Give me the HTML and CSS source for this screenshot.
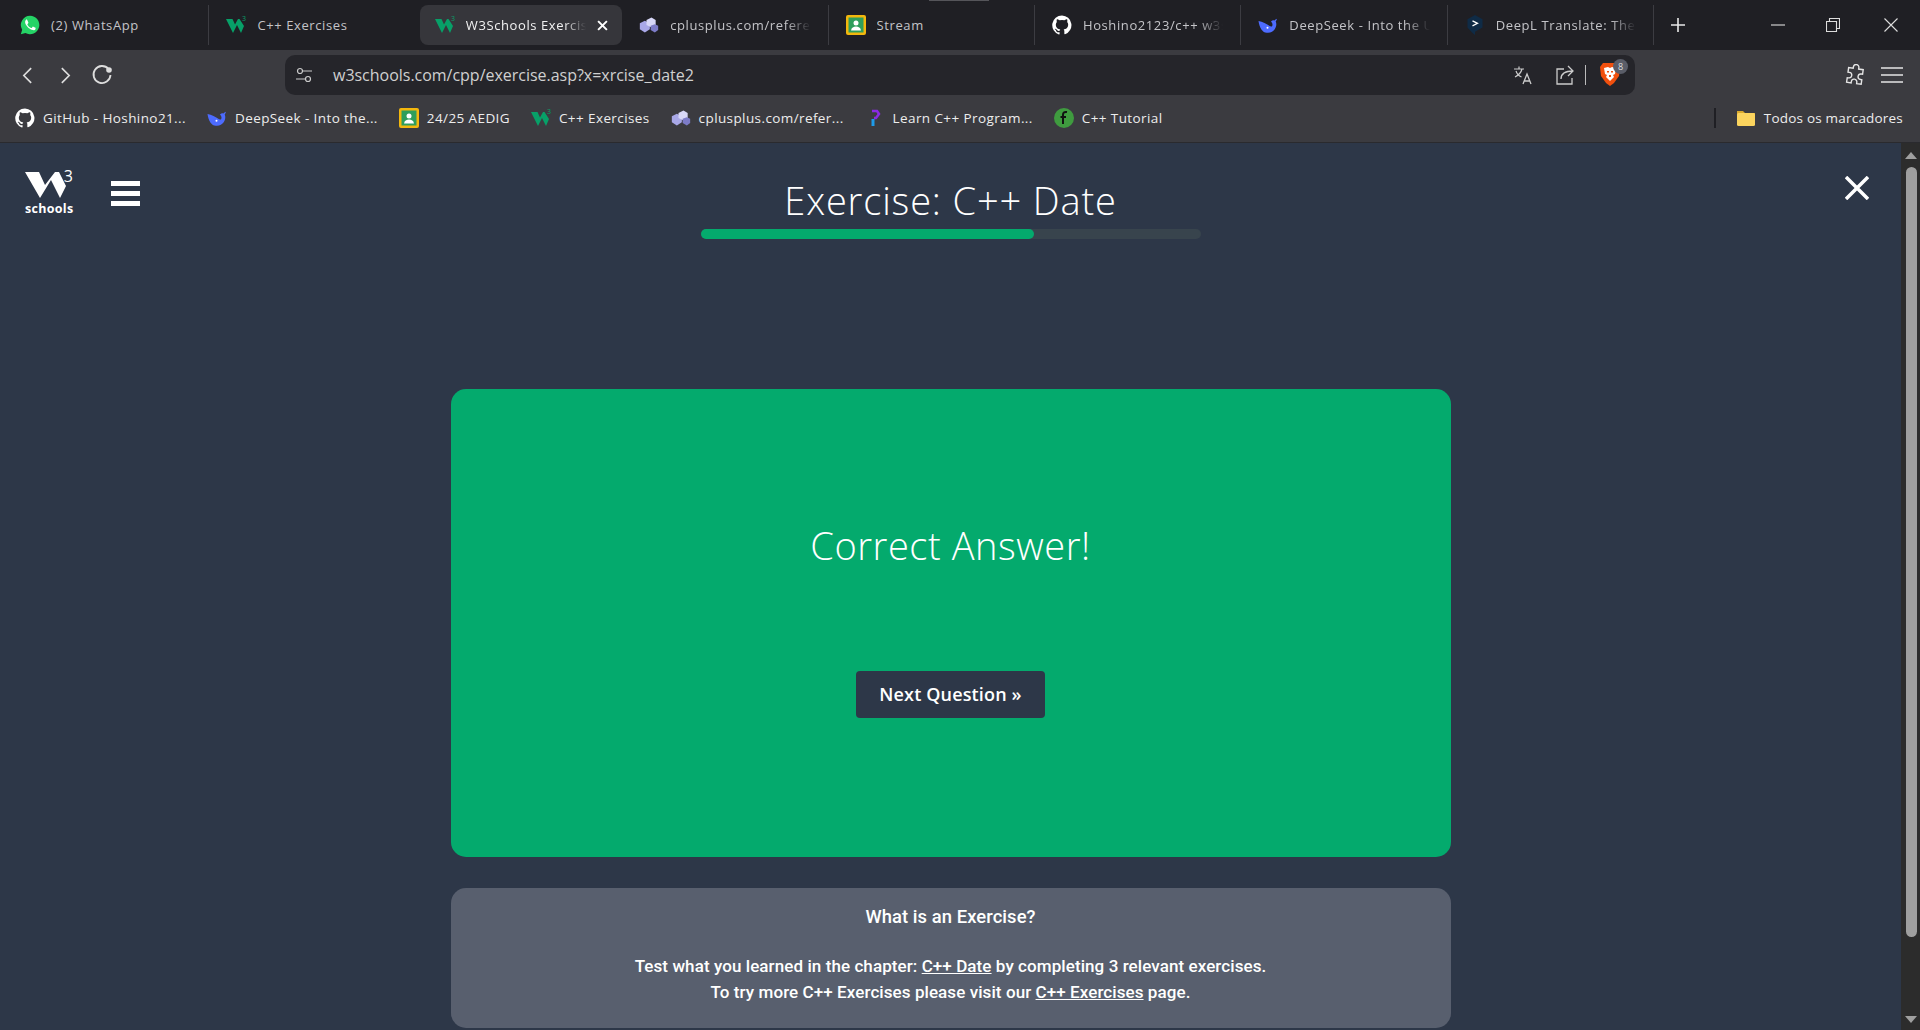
FILE: index.html
```html
<!DOCTYPE html>
<html lang="en">

<head>
  <meta charset="UTF-8">
  <title>W3Schools Exercise</title>
  <link rel="stylesheet" href="styles.css">
</head>

<body>
  <!-- icons used more than once -->
  <svg class="defs" aria-hidden="true">
    <symbol id="i-w3" viewBox="0 0 20 20">
      <polygon fill="#07a068" points="0,4 6.500,4 9,9.500 12,4 13.500,4 18,11 15,18 11,10 7,18" />
      <text x="16" y="5.500" font-size="7" fill="#07a068" font-family="Open Sans">3</text>
    </symbol>
    <symbol id="i-github" viewBox="0 0 24 24">
      <path fill="#fff" d="M12 .5a11.700 11.700 0 0 0-3.700 22.800c.6.100.8-.3.800-.6v-2c-3.300.7-4-1.600-4-1.600-.5-1.400-1.300-1.800-1.300-1.800-1.100-.7.100-.7.100-.7 1.200.1 1.800 1.200 1.800 1.200 1.100 1.800 2.800 1.300 3.500 1 .1-.8.400-1.300.8-1.600-2.600-.3-5.400-1.300-5.400-5.800 0-1.300.5-2.300 1.200-3.100-.1-.3-.5-1.500.1-3.100 0 0 1-.3 3.200 1.200a11 11 0 0 1 5.800 0c2.200-1.500 3.200-1.200 3.200-1.200.6 1.600.2 2.800.1 3.100.8.800 1.200 1.900 1.200 3.100 0 4.500-2.800 5.500-5.400 5.800.4.400.8 1.100.8 2.200v3.200c0 .3.200.7.800.6A11.700 11.700 0 0 0 12 .5z" />
    </symbol>
    <symbol id="i-deepseek" viewBox="0 0 20 20">
      <path fill="#4d6bfe" d="M.5 6c2 .5 4 1 6 2 2.500 1.200 5 3 6.500 3.500 1 .3 1.500-.5 1.500-2 0-1-.5-2-1.500-3 1-1 2.500-1.500 3.500-1 .5-.8 1.300-1.300 2.500-1.800-.3 1.200-.7 2-1.300 2.800 1 2 .8 5-.8 7.500-1.700 2.500-4.500 4-7.400 3.800C5 18.500 1.500 13 .5 6z" />
      <circle cx="9.500" cy="12.800" r="1" fill="#fff" />
    </symbol>
    <symbol id="i-classroom" viewBox="0 0 20 20">
      <rect width="20" height="20" rx="2" fill="#f3b70d" />
      <rect x="2.500" y="2.500" width="15" height="15" fill="#2f9e5b" />
      <circle cx="10" cy="8" r="2.500" fill="#fff" />
      <path fill="#fff" d="M5 15.500c.5-3 2.500-4 5-4s4.500 1 5 4z" />
    </symbol>
    <symbol id="i-cplusplus" viewBox="0 0 24 20">
      <path fill="#a9a8e8" d="M1 8l6-3 6 3v7l-6 4-6-4z" />
      <path fill="#d8d8f8" d="M9 4l6-3 5 3v6l-5 3-6-3z" />
      <path fill="#7d7cc8" d="M14 11l5-2 4 2v5l-4 3-5-3z" />
    </symbol>
  </svg>

  <!-- tab strip -->
  <div class="tabStrip">
    <div class="tabMark"></div>
    <div class="tab">
      <svg class="tabIcon" viewBox="0 0 24 24">
        <path fill="#25d366" d="M12 1a11 11 0 0 0-9.400 16.600L1 23l5.600-1.500A11 11 0 1 0 12 1z" />
        <path fill="#fff" d="M8.300 6.500c-.3 0-.8.100-1.200.6-.5.500-1.500 1.500-1.500 3.400s1.500 3.900 1.700 4.100c.2.300 3 4.600 7.200 6.100 3.500 1.200 4.200.6 5-.5.500-.8.500-2 .3-2.200l-3-1.500c-.4-.1-.6-.2-.9.200l-1.200 1.500c-.2.300-.5.300-.9.100-1.700-.8-3.600-2.200-5-4.600-.2-.4 0-.6.200-.8l1-1.400c.1-.3.100-.5 0-.7l-1.300-3.100c-.2-.5-.4-.6-.7-.6z" transform="translate(1.200 -.5) scale(.88)" />
      </svg>
      <span class="tabLabel">(2) WhatsApp</span>
    </div>
    <div class="tab">
      <svg class="tabIcon"><use href="#i-w3" /></svg>
      <span class="tabLabel">C++ Exercises</span>
    </div>
    <div class="tab tabActive">
      <svg class="tabIcon"><use href="#i-w3" /></svg>
      <span class="tabLabel tabFade">W3Schools Exercise</span>
      <svg class="tabClose" viewBox="0 0 10 10">
        <path d="M1 1l8 8M9 1l-8 8" stroke="#fff" stroke-width="1.800" />
      </svg>
    </div>
    <div class="tab">
      <svg class="tabIcon"><use href="#i-cplusplus" /></svg>
      <span class="tabLabel tabFade">cplusplus.com/reference</span>
    </div>
    <div class="tab">
      <svg class="tabIcon"><use href="#i-classroom" /></svg>
      <span class="tabLabel">Stream</span>
    </div>
    <div class="tab">
      <svg class="tabIcon"><use href="#i-github" /></svg>
      <span class="tabLabel tabFade">Hoshino2123/c++ w3schools</span>
    </div>
    <div class="tab">
      <svg class="tabIcon"><use href="#i-deepseek" /></svg>
      <span class="tabLabel tabFade">DeepSeek - Into the Unknown</span>
    </div>
    <div class="tab">
      <svg class="tabIcon" viewBox="0 0 20 24">
        <path fill="#0f2b46" d="M10 0l9 5v10l-9 5v4l-3-2.500L1 15V5z" />
        <path fill="none" stroke="#fff" stroke-width="1.500" d="M7 7l6 3-6 3" />
      </svg>
      <span class="tabLabel tabFade">DeepL Translate: The world</span>
    </div>
    <div class="newTab">
      <svg viewBox="0 0 14 14" class="newTabIcon">
        <path d="M7 0v14M0 7h14" stroke="#e8e8e8" stroke-width="1.600" />
      </svg>
    </div>
    <div class="winControls">
      <svg viewBox="0 0 14 14" class="winIcon"><path d="M0 7h14" stroke="#ddd" stroke-width="1.100" /></svg>
      <svg viewBox="0 0 14 14" class="winIcon">
        <path d="M.5 3.500h10v10H.5zM3.500 3.500v-3h10v10h-3" fill="none" stroke="#ddd" stroke-width="1.100" />
      </svg>
      <svg viewBox="0 0 14 14" class="winIcon"><path d="M.5.500l13 13M13.500.500l-13 13" stroke="#ddd" stroke-width="1.100" /></svg>
    </div>
  </div>

  <!-- toolbar -->
  <div class="toolbar">
    <div class="navBtns">
      <svg viewBox="0 0 12 20" class="navChevron"><path d="M10 2L2 10l8 8" fill="none" stroke="#ddd" stroke-width="1.800" /></svg>
      <svg viewBox="0 0 12 20" class="navChevron"><path d="M2 2l8 8-8 8" fill="none" stroke="#ddd" stroke-width="1.800" /></svg>
      <svg viewBox="0 0 22 22" class="navReload">
        <path d="M17.500 5A8.500 8.500 0 1 0 19.500 11" fill="none" stroke="#ddd" stroke-width="1.800" />
        <circle cx="18" cy="6" r="2.800" fill="#ddd" />
      </svg>
    </div>
    <div class="addressBar">
      <svg viewBox="0 0 16 16" class="addrTune">
        <circle cx="4" cy="4" r="2.500" fill="none" stroke="#ccc" stroke-width="1.200" />
        <circle cx="12" cy="12" r="2.500" fill="none" stroke="#ccc" stroke-width="1.200" />
        <path d="M7 4h9M0 12h9" stroke="#ccc" stroke-width="1.200" />
      </svg>
      <span class="addrText">w3schools.com/cpp/exercise.asp?x=xrcise_date2</span>
      <div class="addrRight">
        <svg viewBox="0 0 20 20" class="addrIcon">
          <path d="M1 4h10M6 1.500V4M9 4c-1 4-4 6.500-7 8M3 6c1 3 3 5 5.500 6" fill="none" stroke="#ccc" stroke-width="1.200" />
          <path d="M10 19l4-10 4 10M11.500 16h5" fill="none" stroke="#ccc" stroke-width="1.300" />
        </svg>
        <svg viewBox="0 0 20 20" class="addrIcon">
          <path d="M9 4H2v15h15v-6" fill="none" stroke="#ccc" stroke-width="1.300" />
          <path d="M6 14c0-5 4-8 12-8M13 1l5 5-5 5" fill="none" stroke="#ccc" stroke-width="1.300" />
        </svg>
        <div class="addrSep"></div>
        <div class="braveWrap">
          <svg viewBox="0 0 20 24" class="braveIcon">
            <path fill="#f1500e" d="M3 1h14l3 4-1 9-5 7-4 3-4-3-5-7-1-9z" />
            <path fill="#fff" d="M4 6l4-1 2 1 2-1 4 1-1 6-2 1 1 2-4 4-4-4 1-2-2-1z" />
            <path fill="#f1500e" d="M7 9h2v1.500H7zM11 9h2v1.500h-2zM9 13h2v2H9z" />
          </svg>
          <span class="braveBadge">8</span>
        </div>
      </div>
    </div>
    <div class="toolRight">
      <svg viewBox="0 0 22 22" class="toolIcon">
        <path d="M8 3.500a3 3 0 0 1 6 0V5h5v5h-1.500a3 3 0 0 0 0 6H19v5h-5v-1.500a3 3 0 0 0-6 0V21H3v-5h1.500a3 3 0 0 0 0-6H3V5h5z" fill="none" stroke="#e5e5e5" stroke-width="1.500" transform="rotate(8 11 11) scale(.92) translate(1 0)" />
      </svg>
      <svg viewBox="0 0 22 18" class="toolIcon">
        <path d="M0 2h22M0 9h22M0 16h22" stroke="#e5e5e5" stroke-width="1.600" />
      </svg>
    </div>
  </div>

  <!-- bookmarks -->
  <div class="bookmarks">
    <div class="mark"><svg class="markIcon"><use href="#i-github" /></svg><span>GitHub - Hoshino21...</span></div>
    <div class="mark"><svg class="markIcon"><use href="#i-deepseek" /></svg><span>DeepSeek - Into the...</span></div>
    <div class="mark"><svg class="markIcon"><use href="#i-classroom" /></svg><span>24/25 AEDIG</span></div>
    <div class="mark"><svg class="markIcon"><use href="#i-w3" /></svg><span>C++ Exercises</span></div>
    <div class="mark"><svg class="markIcon"><use href="#i-cplusplus" /></svg><span>cplusplus.com/refer...</span></div>
    <div class="mark">
      <svg class="markIcon" viewBox="0 0 20 20">
        <path d="M7 3h5l2 3-3 4H9" fill="none" stroke="#8a2be2" stroke-width="2.500" />
        <path d="M8 11v7" stroke="#1e9be8" stroke-width="3" />
      </svg>
      <span>Learn C++ Program...</span>
    </div>
    <div class="mark">
      <svg class="markIcon" viewBox="0 0 20 20">
        <circle cx="10" cy="10" r="10" fill="#3f9b3f" />
        <path d="M13 4c-3-.5-4 1-4 3v9M6.500 9H12" fill="none" stroke="#111" stroke-width="2" />
      </svg>
      <span>C++ Tutorial</span>
    </div>
    <div class="markRight">
      <div class="markSep"></div>
      <div class="mark">
        <svg class="markIcon" viewBox="0 0 20 18">
          <path fill="#d9a92e" d="M1 2h6l2 2h10v3H1z" />
          <rect x="1" y="4" width="18" height="13" rx="1.500" fill="#fbd45e" />
        </svg>
        <span>Todos os marcadores</span>
      </div>
    </div>
  </div>

  <div class="content">
    <div class="page">
      <div class="topBar">
        <div class="topLeft">
          <div class="logo">
            <svg viewBox="0 0 48 28" class="logoMark">
              <polygon fill="#fff" points="0,0 14,0 20,13 30,0 34,0 41,14 35,26 26,8 15,26" />
            </svg>
            <span class="logoThree">3</span>
            <span class="logoWord">schools</span>
          </div>
          <div class="burger">
            <div class="burgerLine"></div>
            <div class="burgerLine"></div>
            <div class="burgerLine"></div>
          </div>
        </div>
        <div class="topCenter">
          <h1 class="pageTitle">Exercise: C++ Date</h1>
          <div class="progress">
            <div class="progressFill" style="width: 66.67%"></div>
          </div>
        </div>
        <div class="topRight">
          <svg viewBox="0 0 24 24" class="closeIcon">
            <path d="M1 1l22 22M23 1L1 23" stroke="#fff" stroke-width="3.500" />
          </svg>
        </div>
      </div>

      <div class="answerCard">
        <h2 class="answerText">Correct Answer!</h2>
        <a class="nextBtn">Next Question »</a>
      </div>

      <div class="infoCard">
        <p class="infoTitle">What is an Exercise?</p>
        <p class="infoLine">Test what you learned in the chapter: <a>C++ Date</a> by completing 3 relevant exercises.</p>
        <p class="infoLine">To try more C++ Exercises please visit our <a>C++ Exercises</a> page.</p>
      </div>
    </div>

    <div class="scrollBar">
      <div class="arrowUp"></div>
      <div class="thumb"></div>
      <div class="arrowDown"></div>
    </div>
  </div>
</body>

</html>
```

FILE: styles.css
```css
* {
  box-sizing: border-box;
}

body {
  margin: 0;
  height: 100vh;
  overflow: hidden;
  display: flex;
  flex-direction: column;
  background-color: #2d3748;
  font-family: "Open Sans", sans-serif;
  color: #fff;
}

.defs {
  display: none;
}

/* tab strip */
.tabStrip {
  position: relative;
  height: 50px;
  flex: none;
  display: flex;
  align-items: center;
  padding-left: 3px;
  background-color: #1f1f24;
}

.tabMark {
  position: absolute;
  top: 0;
  left: 929px;
  width: 60px;
  height: 1px;
  background-color: #55555a;
}

.tab {
  width: 206.4px;
  height: 40px;
  flex: none;
  display: flex;
  align-items: center;
  gap: 11px;
  padding: 0 17px;
  border-right: 1px solid #3c3c42;
  background-clip: padding-box;
  font-size: 13px;
  color: #c4c4c8;
  letter-spacing: 0.6px;
}

.tab:nth-child(3) {
  border-right-color: transparent;
}

.tabActive {
  margin-left: 4px;
  width: 202.4px;
  padding: 0 14px 0 15px;
  border-right: 0;
  border-radius: 8px;
  background-color: #36363b;
  color: #f2f2f2;
}

.tabIcon {
  width: 20px;
  height: 20px;
  flex: none;
}

.tabLabel {
  flex: 1;
  overflow: hidden;
  white-space: nowrap;
}

.tabFade {
  -webkit-mask-image: linear-gradient(to right, #000 82%, transparent 100%);
  mask-image: linear-gradient(to right, #000 82%, transparent 100%);
}

.tabClose {
  width: 11px;
  height: 11px;
  flex: none;
}

.newTab {
  flex: none;
  display: flex;
  align-items: center;
  padding-left: 17px;
}

.newTabIcon {
  width: 14px;
  height: 14px;
}

.winControls {
  margin-left: auto;
  display: flex;
  align-items: center;
  gap: 44px;
  padding-right: 22px;
}

.winIcon {
  width: 14px;
  height: 14px;
}

.winIcon:first-child {
  margin-right: -3px;
}

/* toolbar */
.toolbar {
  height: 45px;
  flex: none;
  display: flex;
  align-items: center;
  padding-top: 5px;
  background-color: #3b3b40;
}

.navBtns {
  width: 285px;
  flex: none;
  display: flex;
  align-items: center;
  gap: 27px;
  padding-left: 22px;
}

.navChevron {
  width: 11px;
  height: 19px;
}

.navReload {
  width: 22px;
  height: 22px;
  margin-left: -7px;
}

.addressBar {
  width: 1350px;
  height: 40px;
  flex: none;
  display: flex;
  align-items: center;
  padding: 0 7px 0 11px;
  border-radius: 10px;
  background-color: #25252a;
}

.addrTune {
  width: 16px;
  height: 16px;
  flex: none;
}

.addrText {
  margin-left: 21px;
  font-size: 16px;
  color: #d0d0d0;
  letter-spacing: -0.02px;
  white-space: nowrap;
}

.addrRight {
  margin-left: auto;
  display: flex;
  align-items: center;
  gap: 10px;
}

.addrIcon {
  width: 20px;
  height: 20px;
  margin-right: 12px;
}

.addrSep {
  width: 1px;
  height: 20px;
  margin: 0 4px 0 -12px;
  background-color: #bbb;
}

.braveWrap {
  position: relative;
  width: 28px;
  height: 26px;
}

.braveIcon {
  width: 20px;
  height: 24px;
}

.braveBadge {
  position: absolute;
  top: -3px;
  right: 0;
  width: 15px;
  height: 15px;
  border-radius: 50%;
  background-color: #5a5d68;
  font-size: 9px;
  line-height: 15px;
  text-align: center;
  color: #ddd;
}

.toolRight {
  flex: 1;
  display: flex;
  align-items: center;
  justify-content: flex-end;
  gap: 15px;
  padding-right: 17px;
}

.toolIcon {
  width: 22px;
  height: 22px;
}

/* bookmarks */
.bookmarks {
  height: 48px;
  flex: none;
  display: flex;
  align-items: center;
  gap: 21px;
  padding: 0 17px 1px 15px;
  border-bottom: 1px solid #2a2a2e;
  background-color: #3b3b40;
  font-size: 13.5px;
  color: #ededed;
  letter-spacing: 0.4px;
}

.mark {
  display: flex;
  align-items: center;
  gap: 8px;
  white-space: nowrap;
}

.markIcon {
  width: 20px;
  height: 20px;
  flex: none;
}

.markRight {
  margin-left: auto;
  display: flex;
  align-items: center;
  gap: 20px;
  letter-spacing: 0.2px;
}

.markSep {
  width: 2px;
  height: 20px;
  background-color: #1f1f24;
}

/* page */
.content {
  flex: 1;
  min-height: 0;
  display: flex;
}

.page {
  flex: 1;
  min-width: 0;
  overflow: hidden;
}

.topBar {
  display: grid;
  grid-template-columns: 1fr 500px 1fr;
  padding-top: 29px;
}

.topLeft {
  display: flex;
  align-items: flex-start;
  gap: 38px;
  padding-left: 25px;
}

.logo {
  position: relative;
  width: 48px;
  height: 44px;
}

.logoMark {
  display: block;
  width: 48px;
  height: 28px;
}

.logoThree {
  position: absolute;
  top: -5px;
  right: 0;
  font-size: 16px;
  line-height: 18px;
  font-weight: 400;
}

.logoWord {
  position: absolute;
  left: 0;
  bottom: -1px;
  font-size: 12.5px;
  line-height: 16px;
  font-weight: 700;
  letter-spacing: 0.3px;
}

.burger {
  display: flex;
  flex-direction: column;
  gap: 5px;
  margin-top: 9px;
}

.burgerLine {
  width: 29px;
  height: 5px;
  background-color: #fff;
}

.topCenter {
  display: flex;
  flex-direction: column;
  align-items: center;
}

.pageTitle {
  margin: 3px 0 0;
  font-size: 38px;
  line-height: 50px;
  font-weight: 300;
  letter-spacing: 0.85px;
  white-space: nowrap;
}

.progress {
  width: 500px;
  height: 10px;
  margin-top: 4px;
  border-radius: 5px;
  background-color: #38444d;
}

.progressFill {
  height: 100%;
  border-radius: 5px;
  background-color: #04aa6d;
}

.topRight {
  display: flex;
  justify-content: flex-end;
  padding: 4px 32px 0 0;
}

.closeIcon {
  width: 24px;
  height: 24px;
}

.answerCard {
  width: 1000px;
  height: 468px;
  margin: 150px auto 0;
  display: flex;
  flex-direction: column;
  align-items: center;
  border-radius: 15px;
  background-color: #04aa6d;
}

.answerText {
  margin: 128px 0 0;
  font-size: 38px;
  line-height: 56px;
  font-weight: 300;
  letter-spacing: 0.55px;
}

.nextBtn {
  width: 189px;
  height: 47px;
  margin-top: 98px;
  border-radius: 4px;
  background-color: #2d3748;
  font-size: 18px;
  font-weight: 600;
  line-height: 47px;
  text-align: center;
  letter-spacing: 0.15px;
  white-space: nowrap;
}

.infoCard {
  width: 1000px;
  height: 140px;
  margin: 31px auto 0;
  padding-top: 16px;
  border-radius: 15px;
  background-color: #585f6e;
  text-align: center;
  font-family: Roboto, sans-serif;
  font-size: 17px;
  font-weight: 500;
  letter-spacing: 0.08px;
}

.infoLine,
.infoTitle {
  margin: 0;
  line-height: 26px;
}

.infoTitle {
  margin-bottom: 23px;
  font-size: 18.4px;
}

.infoLine a {
  text-decoration: underline;
}

/* fake scrollbar */
.scrollBar {
  width: 19px;
  flex: none;
  display: flex;
  flex-direction: column;
  align-items: center;
  padding: 9px 0 7px 1px;
  background-color: #2c2c2c;
}

.arrowUp,
.arrowDown {
  width: 0;
  height: 0;
  flex: none;
  border-left: 6px solid transparent;
  border-right: 6px solid transparent;
}

.arrowUp {
  border-bottom: 7px solid #9f9f9f;
}

.arrowDown {
  margin-top: auto;
  border-top: 7px solid #9f9f9f;
}

.thumb {
  width: 11px;
  height: 770px;
  margin-top: 8px;
  border-radius: 6px;
  background-color: #9f9f9f;
}
```
